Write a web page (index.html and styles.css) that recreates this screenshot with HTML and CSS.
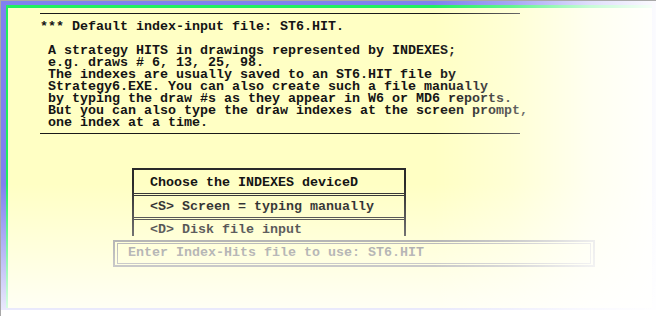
FILE: index.html
```html
<!DOCTYPE html>
<html lang="en">
<head>
    <meta charset="UTF-8">
    <title>ST6 - Default index-input file</title>
    <link rel="stylesheet" href="styles.css">
</head>
<body>
    <div class="screen">
        <div class="frame">
            <div class="console">
                <hr class="rule top-rule">
                <div class="title">*** Default index-input file: ST6.HIT.</div>
                <div class="info">
                    <div>A strategy HITS in drawings represented by INDEXES;</div>
                    <div>e.g. draws # 6, 13, 25, 98.</div>
                    <div>The indexes are usually saved to an ST6.HIT file by</div>
                    <div>Strategy6.EXE. You can also create such a file manually</div>
                    <div>by typing the draw #s as they appear in W6 or MD6 reports.</div>
                    <div>But you can also type the draw indexes at the screen prompt,</div>
                    <div>one index at a time.</div>
                </div>
                <hr class="rule bottom-rule">

                <div class="menu">
                    <div class="menu-row menu-head">Choose the INDEXES deviceD</div>
                    <div class="menu-row">&lt;S&gt; Screen = typing manually</div>
                    <div class="menu-row menu-last">&lt;D&gt; Disk file input</div>
                </div>

                <div class="prompt">
                    <div class="prompt-inner">Enter Index-Hits file to use: ST6.HIT</div>
                </div>
            </div>
        </div>
        <!-- washed-out look of the captured window -->
        <div class="fade"></div>
    </div>
</body>
</html>
```

FILE: styles.css
```css
html, body {
    margin: 0;
    padding: 0;
    background: #ffffff;
}
.screen {
    position: relative;
    width: 656px;
    height: 316px;
    overflow: hidden;
    box-sizing: border-box;
    border-top: 1px solid #a8a8a8;
    border-left: 1px solid #a8a8a8;
}
.frame {
    border-top: 4px solid #8080f0;
    border-left: 5px solid #8080f0;
    border-bottom: 2px solid #8080f0;
    border-right: 4px solid #8080f0;
    height: 303px;
}
.console {
    box-sizing: border-box;
    height: 303px;
    border-top: 3px solid #20f060;
    border-left: 2px solid #20f060;
    background: #ffffc4;
    font-family: "Liberation Mono", "Courier New", monospace;
    font-size: 13.33px;
    font-weight: bold;
    line-height: 12px;
    color: #141414;
    white-space: nowrap;
    overflow: hidden;
}
.rule {
    border: none;
    height: 1px;
    background: #1a1a1a;
    width: 480px;
    margin: 0 0 0 32px;
}
.top-rule {
    margin-top: 5px;
}
.title {
    margin: 7px 0 0 32px;
}
.info {
    margin: 12px 0 0 40px;
}
.bottom-rule {
    margin-top: 4px;
}
.menu {
    width: 270px;
    margin: 34px 0 0 124px;
    border: 2px solid #2a2a2a;
    border-bottom: none;
}
.menu-row {
    padding: 5px 0 4px 16px;
    border-bottom: 3px double #2a2a2a;
}
.menu-head {
    padding-top: 7px;
}
.menu-last {
    padding: 4px 0 0 16px;
    border-bottom: none;
}
.prompt {
    width: 474px;
    margin: 4px 0 0 105px;
    border: 2px solid #8a8a8a;
    padding: 1px 2px;
}
.prompt-inner {
    border: 1px solid #909090;
    padding: 3px 0 4px 10px;
    color: #7c7c7c;
}
.fade {
    position: absolute;
    inset: 0;
    pointer-events: none;
    background:
        linear-gradient(to right, rgba(255,255,255,0) 66%, rgba(255,255,255,0.3) 78%, rgba(255,255,255,0.75) 90%, rgba(255,255,255,0.97) 100%),
        linear-gradient(to bottom, rgba(255,255,255,0) 58%, rgba(255,255,255,0.45) 80%, rgba(255,255,255,0.88) 100%);
}
```
